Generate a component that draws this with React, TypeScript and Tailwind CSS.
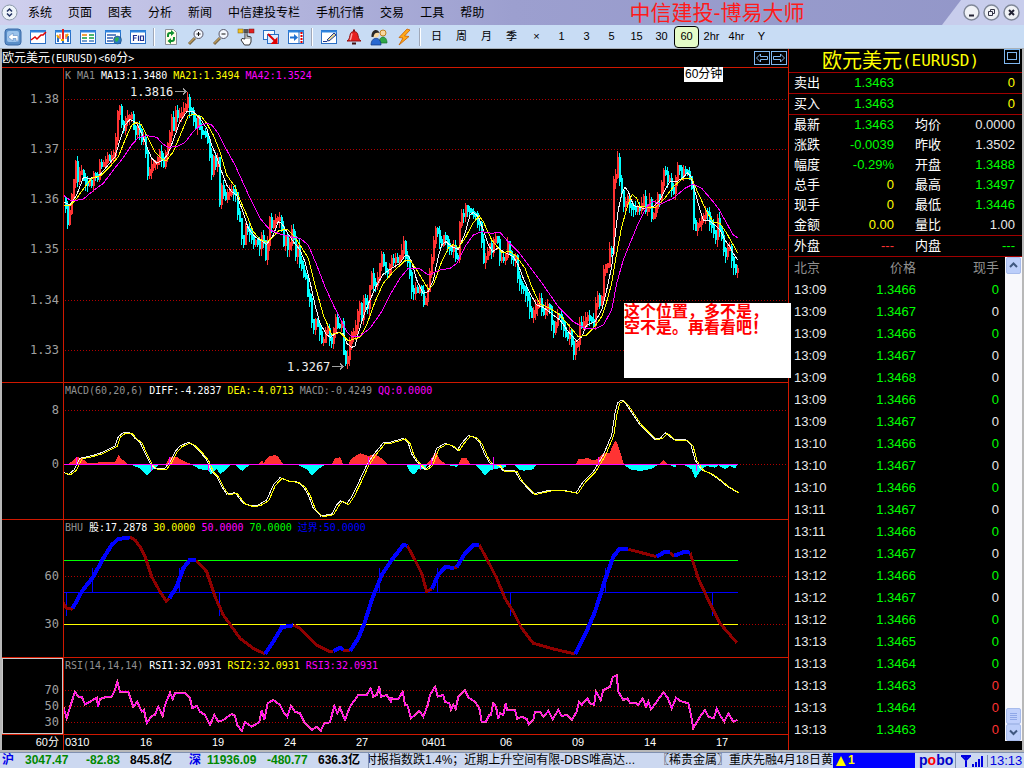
import type { ReactNode } from 'react';

type Point = [number, number];

// Traces are stored in thirds of a pixel, in chunks that each have an origin.
type Chunk = [number, number, string];

const toPoints = (chunks: Chunk[]): Point[] =>
  chunks.flatMap(([ox, oy, data]) =>
    data.split(' ').map((pair): Point => {
      const [x, y] = pair.split(',').map(Number);
      return [(ox + x) / 3, (oy + y) / 3];
    })
  );

const toPolyline = (chunks: Chunk[]) =>
  toPoints(chunks).map(([x, y]) => `${x.toFixed(1)},${y.toFixed(1)}`).join(' ');

const price: Chunk[] = [
  [180, 255, '12,345 22,415 35,310 45,240 52,285 60,260 75,290 92,300 100,260 110,285 118,225 125,240 140,220 150,215 162,195 168,130 173,60 180,90 188,145 192,95 200,105 212,90 218,120 225,145 235,120 245,180 250,160 257,210 262,275 270,240 285,240 290,220 300,200 308,250 318,180 325,170 332,95 338,140 345,80 355,100 365,85 375,70 380,30 388,90 395,80 403,140 410,90 418,140 425,140 433,160 440,150 446,210 453,265 460,210 468,250 473,215 477,360 483,310 493,335 505,320 515,315 525,320 530,380 540,425 547,480 555,435 567,440 577,475 585,470 597,490 605,445 612,480 617,540 622,460 628,400 635,425 642,405 650,400 660,415 670,480 678,450 683,520 692,430 697,440 705,510 712,490 720,545 728,560 735,570 740,630 745,610 750,700 757,735 765,710 775,730 785,770 797,740 806,740 810,800 817,750 827,700 835,740 842,700 847,800'],
  [1020, 450, '10,620 20,640 25,590 35,550 45,530 52,480 58,470 65,510 70,440 80,480 85,430 92,370 100,410 112,390 121,310 130,340 138,380 145,360 155,330 165,325 175,335 183,310 188,265 195,320 203,330 208,380 215,440 225,425 240,410 247,450 254,460 262,410 270,350 278,290 285,245 292,250 300,290 313,240 318,290 328,300 338,290 350,340 355,250 360,190 367,195 375,175 385,180 395,195 405,200 412,230 420,220 425,310 430,330 437,320 447,290 455,310 460,260 470,270 478,330 485,320 492,345 500,275 507,310 515,330 525,320 532,390 540,410 550,415 558,440 565,470 570,500 580,490 587,460 598,455 605,485 615,480 625,465 633,520 638,550 648,505 655,495 662,520 672,545 680,570 688,550 697,610 705,590 710,590 717,515 725,525 735,515 743,495 752,515 760,520 768,440 778,460 785,440 790,340 800,360 806,305 815,300'],
  [1680, 420, '158,120 165,110 170,55 178,120 185,165 192,210 200,165 208,210 220,200 230,205 240,210 250,170 257,220 266,170 274,240 285,195 293,165 300,170 305,110 312,90 320,120 328,115 336,165 343,160 347,75 355,90 365,100 373,90 385,110 392,130 396,200 402,280 410,265 418,240 427,225 437,215 447,245 457,270 465,290 471,245 480,280 487,310 492,350 500,330 508,320 515,360 523,400 530,385 533,375'],
];

const ma13: Chunk[] = [
  [180, 255, '10,350 30,360 50,330 70,278 90,280 115,275 140,245 165,215 180,165 195,120 210,103 230,115 245,145 260,185 275,220 290,235 310,225 325,205 340,165 360,110 380,80 400,80 420,100 440,130 455,180 470,215 485,260 500,300 515,320 530,330 545,370 565,430 585,455 605,468 620,478 640,450 655,410 665,415 680,440 700,470 720,495 735,530 750,590 765,660 780,715 800,750 812,757 830,742 850,745'],
  [1020, 450, '20,580 35,592 45,588 55,550 70,500 90,450 110,405 130,372 160,352 180,340 195,317 205,318 215,335 230,390 250,430 265,425 280,390 295,320 305,285 318,275 335,290 355,298 375,250 390,195 400,187 415,200 430,240 445,285 458,305 475,293 490,305 520,320 535,345 550,385 570,430 590,465 610,472 640,495 660,510 685,545 710,573 725,560 740,525 765,515 785,480 800,420 815,350 825,260 835,180 845,130 855,112 865,125 880,165'],
  [1680, 420, '225,198 250,205 280,200 300,180 315,150 330,125 350,125 370,112 382,98 392,108 405,155 420,210 430,240 445,240 465,255 480,270 495,300 510,320 520,340 533,360'],
];

const ma21: Chunk[] = [
  [180, 255, '10,361 30,363 50,340 75,305 95,280 125,270 150,245 175,215 195,165 215,120 230,112 245,120 265,160 285,200 305,222 318,228 340,200 365,140 385,92 400,88 425,95 440,115 460,150 480,200 500,270 525,305 540,345 560,390 580,440 600,463 620,472 640,455 655,438 680,432 700,450 720,480 745,520 765,600 790,690 815,748'],
  [1020, 450, '0,548 25,572 60,562 80,525 105,455 130,400 160,365 195,332 210,330 230,360 265,418 280,405 305,335 325,295 340,283 355,293 375,265 400,218 418,198 430,215 455,270 485,307 510,305 530,320 555,355 575,410 600,462 630,475 660,495 690,530 715,560 740,555 760,535 785,500 800,455 815,400 830,310 845,230 865,160 877,133 890,145'],
  [1680, 420, '240,200 285,203 310,180 340,140 370,115 395,115 410,150 440,215 460,247 480,250 500,280 520,315 533,340'],
];

const ma42: Chunk[] = [
  [180, 255, '10,330 30,345 45,347 70,342 100,317 130,295 160,255 190,218 215,180 235,158 260,152 290,157 310,178 325,187 350,185 375,172 400,140 420,122 440,115 455,120 475,145 500,195 525,240 550,295 575,350 600,400 630,435 660,447 700,457 720,460 745,480 770,540 795,605 820,660'],
  [1020, 450, '0,505 20,545 35,560 60,558 90,535 125,485 150,435 180,385 205,355 240,357 265,375 300,360 330,355 350,340 375,290 400,255 425,245 455,250 480,247 500,270 535,305 565,345 610,405 655,470 700,515 735,535 765,537 790,525 815,480 830,400 850,330 870,280'],
  [1680, 420, '235,250 260,200 280,183 300,193 340,175 375,145 400,132 425,145 455,180 475,205 500,250 520,285 533,293'],
];

const diff: Chunk[] = [
  [0, 1140, '190,277 205,283 222,270 240,235 270,228 300,220 325,208 345,198 355,170 370,158 390,158 405,175 420,187 435,220 450,250 465,265 495,265 510,245 525,215 540,198 565,187 580,195 600,215 620,240 635,275 650,290 665,320 680,342 705,338 730,370 755,378 775,375 800,360 820,315 840,293 865,303 890,305 910,320 925,345 940,385 962,408 995,402 1010,375 1022,362 1040,372 1055,350 1075,310 1100,255 1120,225 1150,188'],
  [1170, 1140, '0,187 40,175 55,190 65,222 80,245 105,268 122,255 140,205 165,190 185,197 202,210 215,190 235,167 255,172 270,190 285,225 300,250 325,255 340,273 375,272 390,300 430,342 480,330 515,330 558,338 580,305 610,275 640,225 665,165 675,100 683,68 695,60 710,75 750,135 795,178 812,173 826,158 850,178 885,178 903,195 915,240 935,270 960,280 985,297 1010,318 1042,337'],
];

// DEA trails DIFF by two pixels
const dea: Chunk[] = diff.map(([x, y, d]) => [x + 6, y + 2, d]);

const macdUp: Chunk[] = [
  [0, 1140, '205,253 220,240 230,230 245,235 265,250 290,248 310,246 345,246 355,225 365,237 385,253'],
  [0, 1140, '497,253 510,230 530,230 545,240 575,253'],
  [0, 1140, '775,253 787,240 790,250 805,230 825,225 835,230 850,253'],
  [0, 1140, '995,253 1005,235 1020,232 1030,253'],
  [0, 1140, '1045,253 1055,235 1080,220 1095,225 1105,228 1125,222 1145,235 1165,253'],
  [1170, 1140, '110,253 122,240 137,215 150,240 170,253'],
  [1170, 1140, '205,253 215,233 228,233 242,253'],
  [1170, 1140, '558,253 565,237 595,235 612,242 625,235 640,220 660,218 668,195 678,180 690,215 702,253'],
  [1170, 1140, '808,253 822,240 834,253'],
];

const macdDown: Chunk[] = [
  [0, 1140, '395,255 420,265 440,286 460,268 475,255'],
  [0, 1140, '575,255 600,268 625,270 633,284 650,268 660,282 680,268 690,255'],
  [0, 1140, '705,255 727,273 748,255'],
  [0, 1140, '895,255 920,268 935,286 955,268 974,255'],
  [1170, 1140, '50,255 60,275 72,284 85,268 105,268 112,255'],
  [1170, 1140, '175,255 200,261 205,255'],
  [1170, 1140, '255,255 275,275 285,286 300,270 345,262 350,255'],
  [1170, 1140, '375,255 385,268 400,272 430,268 438,255'],
  [1170, 1140, '703,255 720,268 750,273 785,266 804,255'],
  [1170, 1140, '838,255 855,262 860,255'],
  [1170, 1140, '883,255 905,268 915,296 935,268 950,258 975,263 985,256 1005,268 1020,258 1035,265 1042,255'],
];

const bhuUp: Chunk[] = [
  [0, 1545, '218,280 245,230 280,185 310,130 335,90 355,72 390,67'],
  [0, 1545, '508,250 530,215 550,160 570,134 588,136'],
  [0, 1545, '795,417 820,380 845,337 880,331'],
  [0, 1545, '1000,408 1020,398 1030,405'],
  [0, 1545, '1050,408 1075,370 1095,320 1115,255 1145,180 1175,135 1190,116 1210,90 1222,92'],
  [1170, 1545, '125,222 145,180 165,157 192,158'],
  [1170, 1545, '200,157 225,115 250,90 268,90'],
  [1170, 1545, '555,417 585,360 615,290 645,195 670,125 688,102 715,103'],
  [1170, 1545, '800,125 825,110 840,112'],
  [1170, 1545, '852,122 885,110 900,113'],
];

const bhuDown: Chunk[] = [
  [0, 1545, '190,265 200,280 218,283'],
  [0, 1545, '390,67 405,75 420,95 435,125 455,185 480,230 498,258 508,250'],
  [0, 1545, '588,136 620,170 645,245 670,300 720,370 760,400 795,417'],
  [0, 1545, '880,330 900,340 950,390 990,410 1000,408'],
  [0, 1545, '1030,405 1050,408'],
  [1170, 1545, '52,92 75,135 95,175 110,230 125,222'],
  [1170, 1545, '190,158 202,158'],
  [1170, 1545, '268,90 300,150 320,190 345,250 370,290 395,340 430,385 490,402 555,417'],
  [1170, 1545, '715,103 750,112 800,125'],
  [1170, 1545, '840,112 852,125'],
  [1170, 1545, '900,113 925,190 955,255 990,325 1040,383'],
];

const rsi: Chunk[] = [
  [0, 1545, '190,575 200,610 212,570 225,530 235,545 245,545 255,568 270,560 290,548 294,575 300,552 320,545 335,545 345,525 352,500 360,530 385,530 400,575 412,560 425,590 432,585 440,625 455,603 465,600 475,575 488,602 495,570 510,533 518,552 525,535 555,535 570,550 577,580 590,572 600,590 615,600 630,630 643,600 655,620 670,615 695,597 705,602 712,630 725,648 735,622 755,635 778,622 785,585 793,615 803,565 820,555 840,570 850,590 862,605 873,572 885,590 900,595 912,620 935,645 950,635 962,648 973,625 990,622 1003,572 1012,595 1020,578 1035,615 1050,575 1075,540 1100,540 1112,520 1120,545 1130,540 1138,515 1143,545 1160,540 1175,563'],
  [1170, 1545, '0,550 25,552 38,530 45,570 52,570 63,610 88,588 100,605 113,570 120,540 135,515 143,545 160,540 165,560 178,565 183,585 190,570 197,583 205,545 225,525 235,547 255,560 268,580 275,620 288,620 298,600 303,600 310,565 318,575 325,612 330,595 340,600 347,565 352,585 375,585 382,612 395,605 410,612 416,628 430,615 435,590 450,590 460,605 475,588 488,612 505,585 515,603 530,600 545,615 560,590 567,560 575,570 592,550 600,565 612,570 618,530 632,555 640,525 660,515 668,487 680,480 685,530 700,555 712,550 720,563 738,565 745,570 758,550 768,575 775,560 783,583 800,560 820,532 833,548 845,580 858,548 870,558 895,565 903,600 910,640 930,605 945,585 955,605 972,610 980,580 990,600 1003,620 1015,595 1030,620 1042,615'],
];

// One bar every two pixels, interpolated along the price trace
function buildBars() {
  const points = toPoints(price);
  let up = '';
  let down = '';
  let seed = 7;
  const random = () => {
    seed = (seed * 1103515245 + 12345) % 2147483648;
    return seed / 2147483648;
  };
  let i = 0;
  let last = points[0][1];
  for (let x = 65; x < 738; x += 2) {
    while (i < points.length - 2 && points[i + 1][0] < x) i++;
    const [x1, y1] = points[i];
    const [x2, y2] = points[i + 1];
    const y = y1 + ((y2 - y1) * (x - x1)) / (x2 - x1) + (random() - 0.5) * 5;
    const top = Math.min(last, y) - 2;
    const bottom = Math.max(last, y) + 2;
    const bar = `M${x + 0.5} ${Math.round(top - random() * 6)}V${Math.round(bottom + random() * 7)}M${x + 1.5} ${Math.round(top)}V${Math.round(bottom)}`;
    if (y < last) up += bar;
    else down += bar;
    last = y;
  }
  return { up, down };
}

const bars = buildBars();

const menus = ['系统', '页面', '图表', '分析', '新闻', '中信建投专栏', '手机行情', '交易', '工具', '帮助'];
const periods = ['日', '周', '月', '季', '×', '1', '3', '5', '15', '30', '60', '2hr', '4hr', 'Y'];
const dates = ['16', '19', '24', '27', '0401', '06', '09', '14', '17'];

const GREEN = 'text-[#00ff00]';
const YELLOW = 'text-[#ffff00]';
const WHITE = 'text-[#e8e8e8]';
const RED = 'text-[#ff3333]';
const GRAY = 'text-[#909090]';
const MAGENTA = 'text-[#ff00ff]';

const quotes = [
  [
    ['卖出', '1.3463', GREEN, '', '0', YELLOW],
  ],
  [
    ['买入', '1.3463', GREEN, '', '0', YELLOW],
  ],
  [
    ['最新', '1.3463', GREEN, '均价', '0.0000', WHITE],
    ['涨跌', '-0.0039', GREEN, '昨收', '1.3502', WHITE],
    ['幅度', '-0.29%', GREEN, '开盘', '1.3488', GREEN],
    ['总手', '0', YELLOW, '最高', '1.3497', GREEN],
    ['现手', '0', YELLOW, '最低', '1.3446', GREEN],
    ['金额', '0.00', YELLOW, '量比', '1.00', WHITE],
  ],
  [
    ['外盘', '---', RED, '内盘', '---', GREEN],
  ],
];

const ticks = [
  ['13:09', '1.3466', GREEN],
  ['13:09', '1.3467', WHITE],
  ['13:09', '1.3466', GREEN],
  ['13:09', '1.3467', WHITE],
  ['13:09', '1.3468', WHITE],
  ['13:09', '1.3466', GREEN],
  ['13:09', '1.3467', WHITE],
  ['13:10', '1.3466', GREEN],
  ['13:10', '1.3467', WHITE],
  ['13:10', '1.3466', GREEN],
  ['13:11', '1.3467', WHITE],
  ['13:11', '1.3466', GREEN],
  ['13:12', '1.3467', WHITE],
  ['13:12', '1.3466', GREEN],
  ['13:12', '1.3467', WHITE],
  ['13:12', '1.3466', GREEN],
  ['13:13', '1.3465', GREEN],
  ['13:13', '1.3464', GREEN],
  ['13:13', '1.3463', RED],
  ['13:13', '1.3464', RED],
  ['13:13', '1.3463', RED],
];

function Icon({ children }: { children: ReactNode }) {
  return (
    <svg width="18" height="18" viewBox="0 0 18 18" fill="none">
      {children}
    </svg>
  );
}

const frame = (
  <>
    <rect x="1.5" y="2.5" width="15" height="13" fill="#fff" stroke="#2a6fc4" />
    <path d="M1 3.5h16" stroke="#2f86e0" strokeWidth="2" />
  </>
);

const magnifier = (
  <>
    <path d="M2 16l6-6" stroke="#7a6a4a" strokeWidth="3" />
    <path d="M2 15.5l5.5-5.5" stroke="#e8b860" strokeWidth="1" />
    <circle cx="11.5" cy="6" r="4.5" fill="#f4f8ff" stroke="#556" />
  </>
);

const tools: { label: string; icon: ReactNode }[][] = [
  [
    {
      label: '返回',
      icon: (
        <>
          <rect x="1" y="1" width="16" height="16" rx="3" fill="#5a8fc8" stroke="#3a6aa8" />
          <rect x="3" y="3" width="12" height="11" rx="2" fill="#9cc4ec" />
          <path d="M4 9l5-4v2.5h4a1 1 0 0 1 1 1V13h-2v-2.5H9V13z" fill="#fff" stroke="#4a7ab8" strokeWidth=".5" />
        </>
      ),
    },
    { label: '分时图', icon: <>{frame}<path d="M2 12l4-3 2 2 4-4h2l3-3" stroke="#e00000" strokeWidth="1.5" /></> },
    {
      label: 'K线图',
      icon: (
        <>
          {frame}
          <path d="M4 8v6M14 8v6M9 12v3" stroke="#2a6fc4" strokeWidth="2" />
          <path d="M9 1v10" stroke="#e02020" strokeWidth="2" />
          <path d="M6 6v5M12 6v5" stroke="#e02020" />
          <path d="M3 7l2 3M14 6l-2 3M7 12h3" stroke="#f0a800" strokeWidth="2" />
        </>
      ),
    },
    {
      label: '报价',
      icon: (
        <>
          {frame}
          <path d="M3 7h5" stroke="#f08000" strokeWidth="1.5" />
          <path d="M10 7h5M3 10h5M10 10h5" stroke="#10a040" strokeWidth="1.5" />
          <path d="M3 13h5M10 13h5" stroke="#4a80c0" strokeWidth="1.5" />
        </>
      ),
    },
    {
      label: '新闻',
      icon: (
        <>
          {frame}
          <path d="M3 7h9M3 10h6M3 13h6" stroke="#3060b0" strokeWidth="1.5" />
          <circle cx="13.5" cy="12" r="4" fill="#2878c8" stroke="#204060" strokeWidth=".5" />
          <path d="M11 10l3-1 1 2-2 3-2-1z" fill="#30b050" />
        </>
      ),
    },
    {
      label: 'F10',
      icon: (
        <>
          {frame}
          <path d="M4.5 13V7.5h3.5M4.5 10h3M9.5 7.5V13M11.5 8h3v4.500h-3z" stroke="#203090" strokeWidth="1.2" />
        </>
      ),
    },
  ],
  [
    {
      label: '刷新',
      icon: (
        <>
          <path d="M3.5 1.5h8l3 3v12h-11z" fill="#fffde8" stroke="#8a9098" />
          <path d="M6 9V7a2 2 0 0 1 2-2h2M12 9v2a2 2 0 0 1-2 2H8" stroke="#109030" strokeWidth="2" />
          <path d="M9 2l3.5 3L9 8zM9 10l-3.5 3L9 16z" fill="#109030" />
        </>
      ),
    },
    { label: '放大', icon: <>{magnifier}<path d="M9.5 6h4M11.5 4v4" stroke="#111" /></> },
    { label: '缩小', icon: <>{magnifier}<path d="M9.5 6h4" stroke="#111" /></> },
    {
      label: '手形',
      icon: (
        <>
          <rect x="1" y="1" width="5" height="4" fill="#f0c020" stroke="#806010" strokeWidth=".5" />
          <rect x="6.5" y="1" width="5" height="4" fill="#555" />
          <rect x="12" y="1" width="5" height="4" fill="#e02020" stroke="#701010" strokeWidth=".5" />
          <path d="M8 11V5.5a1 1 0 0 1 2 0V8l4 1v5l-1.5 3h-5L4 12l1-1.5z" fill="#fff" stroke="#333" />
          <path d="M10 8v3M12 8.5V11" stroke="#333" strokeWidth=".7" />
        </>
      ),
    },
    {
      label: '切换',
      icon: (
        <>
          <rect x="1.5" y="2.5" width="11" height="9" fill="#f4faff" stroke="#2a6fc4" />
          <rect x="5.5" y="6.5" width="11" height="9" fill="#dcecff" stroke="#2a6fc4" />
          <path d="M6 6l7 7" stroke="#e00000" strokeWidth="2" />
          <path d="M15.5 9v7h-7z" fill="#e00000" />
        </>
      ),
    },
    {
      label: '右移',
      icon: (
        <>
          {frame}
          <path d="M12 3v12" stroke="#2a6fc4" />
          <path d="M14.5 4v11" stroke="#e00000" strokeWidth="2" strokeDasharray="2 1" />
          <path d="M3 9.5h5" stroke="#2070d0" strokeWidth="2" />
          <path d="M7 6l4 3.5L7 13z" fill="#2070d0" />
        </>
      ),
    },
  ],
  [
    {
      label: '画线',
      icon: (
        <>
          {frame}
          <path d="M3 13.5h4l8-8" stroke="#203a90" />
          <path d="M7 12l7-7 2 2-7 6z" fill="#e8d890" stroke="#203a90" />
        </>
      ),
    },
    {
      label: '预警',
      icon: (
        <>
          <path d="M9 1.5v2" stroke="#801010" strokeWidth="2" />
          <path d="M2 13c3-1.5 2.500-5 3.500-7.500C6.500 3 11.500 3 12.500 5.500 13.500 8 13 11.500 16 13z" fill="#e82020" stroke="#901010" />
          <path d="M7 5.5C6 8 6.5 10 5 12" stroke="#ffa0a0" strokeWidth="1.5" />
          <path d="M7 15.5h4" stroke="#401010" strokeWidth="2" />
        </>
      ),
    },
    {
      label: '社区',
      icon: (
        <>
          <path d="M9 15c0-8 8-8 8 0z" fill="#30a848" stroke="#187028" strokeWidth=".7" />
          <circle cx="13" cy="5" r="3" fill="#f8d8a0" stroke="#c08020" />
          <path d="M1 17c0-9 10-9 10 0z" fill="#2868d0" stroke="#103880" strokeWidth=".7" />
          <circle cx="5.5" cy="6" r="3.5" fill="#f8d8a0" />
          <path d="M1.5 9C1 1 8 0 9.5 5 6 4 4 5 3.5 9z" fill="#282828" />
        </>
      ),
    },
    { label: '闪电', icon: <path d="M12 1L4 9.5l4 .5-4 7 10-8.5-4.5-.5L15 2z" fill="#ffa818" stroke="#c86000" strokeWidth=".8" /> },
  ],
];

function MenuBar() {
  return (
    <header className="flex h-[25px] items-center bg-linear-to-r from-[#d0d0ee] via-[#9c9fcf] via-50% to-[#9296c8] text-xs">
      <button aria-label="系统菜单" className="ml-px mr-[10px]">
        <svg width="17" height="17" viewBox="0 0 17 17" fill="none">
          <circle cx="8.5" cy="8.5" r="7.5" fill="#eef4fa" stroke="#8a98a8" />
          <path d="M6 7.5L8.5 5 11 7.5M6 9.5L8.5 12 11 9.5" stroke="#203060" strokeWidth="1.5" />
        </svg>
      </button>
      <nav className="flex gap-4">
        {menus.map((menu) => (
          <button key={menu} className="whitespace-nowrap">{menu}</button>
        ))}
      </nav>
      <h1 className="flex-1 whitespace-nowrap pl-2 text-center text-[21px] leading-6 text-[#ff1a1a]">中信建投-博易大师</h1>
      <div className="flex h-full w-[82px] items-center justify-end gap-[3px] bg-[#c8cdec] pr-1 [clip-path:polygon(19px_0,100%_0,100%_100%,0_100%)]">
        <WindowButton label="最小化"><path d="M6 11.5h5" stroke="#223" strokeWidth="2" /></WindowButton>
        <WindowButton label="还原"><path d="M7.5 7V5.5h4v4H10M5.5 7.5h4v4h-4z" stroke="#334" /></WindowButton>
        <WindowButton label="关闭"><path d="M6 6l5 5M11 6l-5 5" stroke="#223" strokeWidth="2" /></WindowButton>
      </div>
    </header>
  );
}

function WindowButton({ label, children }: { label: string; children: ReactNode }) {
  return (
    <button aria-label={label}>
      <svg width="17" height="17" viewBox="0 0 17 17" fill="none">
        <circle cx="8.5" cy="8.5" r="7.5" fill="#f0f2f6" stroke="#808898" strokeWidth="1.5" />
        {children}
      </svg>
    </button>
  );
}

function ToolBar() {
  return (
    <div className="flex h-6 items-center border-b border-[#a8b0b8] bg-[#c8dcf4] text-[11px]">
      {tools.map((group) => (
        <div key={group[0].label} className="flex items-center">
          {group.map((tool) => (
            <button key={tool.label} aria-label={tool.label} className="flex w-[25px] justify-center">
              <Icon>{tool.icon}</Icon>
            </button>
          ))}
          <div className="mx-[3px] h-[18px] w-[2px] border-l border-r border-l-[#a0a8b8] border-r-white" />
        </div>
      ))}
      {periods.map((period) => (
        <button
          key={period}
          className={
            period === '60'
              ? 'h-[22px] w-[25px] rounded-sm border border-black bg-[#e4fcc8]'
              : 'h-[22px] w-[25px]'
          }
        >
          {period}
        </button>
      ))}
    </div>
  );
}

interface PanelProps {
  top: number;
  height: string;
  legend: [string, string][];
  labels: [string, number][];
  boxed?: boolean;
  children: ReactNode;
}

// `top` is where the plot area starts in chart coordinates, below the legend
function Panel({ top, height, legend, labels, boxed, children }: PanelProps) {
  return (
    <section className="flex border-b border-[#d01800]">
      <div className={boxed ? 'w-[61px] border border-[#c8c8c8]' : 'w-[61px]'}>
        <svg className="block h-4 w-full overflow-visible">
          <g fill="#a0a0a0" textAnchor="end" className="font-['DejaVu_Sans_Mono',monospace] text-xs">
            {labels.map(([text, y]) => (
              <text key={text} x={boxed ? 56 : 57} y={y - top + (boxed ? 19 : 20)}>{text}</text>
            ))}
          </g>
        </svg>
      </div>
      <div className="min-w-0 flex-1 overflow-hidden border-l border-[#d01800]">
        <div className="flex h-4 gap-[6px] whitespace-nowrap pl-px font-['DejaVu_Sans_Mono','Noto_Sans_CJK_SC',monospace] text-[10px] leading-4">
          {legend.map(([text, color]) => (
            <span key={text} className={color}>{text}</span>
          ))}
        </div>
        <svg className={`block w-full ${height}`} shapeRendering="crispEdges" fill="none">
          {labels.map(([text, y]) => (
            <line key={text} x1="1" x2="100%" y1={y - top + 0.5} y2={y - top + 0.5} stroke="#b00000" strokeDasharray="1 2" />
          ))}
          <g transform={`translate(-64 ${-top})`}>{children}</g>
        </svg>
      </div>
    </section>
  );
}

function Chart() {
  return (
    <main className="relative min-w-0 flex-1 border-r border-[#d01800]">
      <div className="flex h-[19px] items-center justify-between border-b border-[#d01800] pr-px text-xs text-white">
        <h2 className="whitespace-nowrap">
          欧元美元<span className="font-['DejaVu_Sans_Mono',monospace] text-[10px]">(EURUSD)&lt;60</span>分
          <span className="font-['DejaVu_Sans_Mono',monospace] text-[10px]">&gt;</span>
        </h2>
        <div className="flex gap-px">
          <button aria-label="上一个" className="border border-[#80b8f0]">
            <svg width="14" height="12" viewBox="0 0 14 12" fill="none">
              <path d="M1.5 6l4-4v2.5h7v3h-7V10z" stroke="#80b8f0" />
            </svg>
          </button>
          <button aria-label="下一个" className="border border-[#80b8f0]">
            <svg width="14" height="12" viewBox="0 0 14 12" fill="none">
              <path d="M12.5 6l-4-4v2.5h-7v3h7V10z" stroke="#80b8f0" />
            </svg>
          </button>
        </div>
      </div>

      <Panel
        top={84}
        height="h-[298px]"
        legend={[
          ['K', GRAY],
          ['MA1', GRAY],
          ['MA13:1.3480', 'text-white'],
          ['MA21:1.3494', YELLOW],
          ['MA42:1.3524', MAGENTA],
        ]}
        labels={[['1.38', 99], ['1.37', 149], ['1.36', 199], ['1.35', 249], ['1.34', 300], ['1.33', 350]]}
      >
        <path d={bars.up} stroke="#ff3333" />
        <path d={bars.down} stroke="#00ffff" />
        <polyline points={toPolyline(ma13)} stroke="#f4f4f4" />
        <polyline points={toPolyline(ma21)} stroke="#ffff00" />
        <polyline points={toPolyline(ma42)} stroke="#ff00ff" />
        <g fill="#f0f0f0" className="font-['DejaVu_Sans_Mono',monospace] text-xs">
          <text x="130" y="96">1.3816</text>
          <text x="287" y="371">1.3267</text>
        </g>
        <path d="M175 91.5h11M183 88.5l3 3-3 3M332 366.5h11M340 363.5l3 3-3 3" stroke="#a0a0a0" />
      </Panel>

      <Panel
        top={399}
        height="h-[120px]"
        legend={[
          ['MACD(60,20,6)', GRAY],
          ['DIFF:-4.2837', 'text-white'],
          ['DEA:-4.0713', YELLOW],
          ['MACD:-0.4249', GRAY],
          ['QQ:0.0000', MAGENTA],
        ]}
        labels={[['8', 410], ['0', 464]]}
      >
        {macdUp.map((area, i) => (
          <polygon key={i} points={toPolyline([area])} fill="#ff3333" />
        ))}
        {macdDown.map((area, i) => (
          <polygon key={i} points={toPolyline([area])} fill="#00ffff" />
        ))}
        <polyline points={toPolyline(diff)} stroke="#f0f0f0" />
        <polyline points={toPolyline(dea)} stroke="#ffff00" />
        <path d="M64 464.5H738M76.5 457v7M151.5 464v7M169.5 457v7M208.5 464v7M368.5 457v7M420.5 464v6M431.5 458v6M493.5 457v12M598.5 457v7M696.5 464v7" stroke="#ff00ff" />
      </Panel>

      <Panel
        top={536}
        height="h-[121px]"
        legend={[
          ['BHU', GRAY],
          ['股:17.2878', 'text-white'],
          ['30.0000', YELLOW],
          ['50.0000', MAGENTA],
          ['70.0000', GREEN],
          ['过界:50.0000', 'text-[#0000ff]'],
        ]}
        labels={[['60', 576], ['30', 624]]}
      >
        <path d="M64 592.5H738M66.5 592v24M92.5 568v24M179.5 568v24M219.5 592v24M379.5 568v24M437.5 568v24M510.5 592v24M605.5 568v24M712.5 592v24" stroke="#0000ff" />
        <path d="M64 560.5H738" stroke="#00ff00" />
        <path d="M64 624.5H738" stroke="#ffff00" />
        {bhuDown.map((part, i) => (
          <polyline key={i} points={toPolyline([part])} stroke="#900000" strokeWidth="3" />
        ))}
        {bhuUp.map((part, i) => (
          <polyline key={i} points={toPolyline([part])} stroke="#0000ff" strokeWidth="4" />
        ))}
      </Panel>

      <Panel
        top={674}
        height="h-[60px]"
        boxed
        legend={[
          ['RSI(14,14,14)', GRAY],
          ['RSI1:32.0931', 'text-white'],
          ['RSI2:32.0931', YELLOW],
          ['RSI3:32.0931', MAGENTA],
        ]}
        labels={[['70', 690], ['50', 706], ['30', 722]]}
      >
        <polyline points={toPolyline(rsi)} stroke="#ff60a8" strokeWidth="2" />
        <polyline points={toPolyline(rsi)} stroke="#ff00ff" />
      </Panel>

      <div className="flex h-[15px] overflow-hidden text-[11px] leading-[15px] text-white">
        <div className="w-[61px] pr-1 text-right">60分</div>
        <div className="w-[47px] border-l border-[#d01800] pl-px">0310</div>
        {dates.map((date) => (
          <div key={date} className="w-[72px] text-center">{date}</div>
        ))}
      </div>

      <div className="absolute left-[682px] top-[18px] bg-white px-px text-xs leading-[15px] text-black">60分钟</div>
      <p className="absolute left-[622px] top-[254px] z-10 h-[75px] w-[167px] whitespace-nowrap bg-white pt-px text-base font-bold leading-4 text-[#ff0000]">
        这个位置，多不是，
        <br />
        空不是。再看看吧！
      </p>
    </main>
  );
}

function QuotePanel() {
  return (
    <aside className="w-[233px] text-[13px] text-white">
      <div className="flex h-6 items-center border-b border-[#a00000] pr-[2px]">
        <h2 className={`flex flex-1 items-center justify-center whitespace-nowrap pl-2 text-[20px] leading-5 ${YELLOW}`}>
          欧元美元<span className="font-['DejaVu_Sans_Mono',monospace] text-base leading-5">(EURUSD)</span>
        </h2>
        <button aria-label="窗口" className="self-start border border-[#80b8f0] p-[2px]">
          <svg className="block" width="10" height="9" fill="none">
            <rect x="0.5" y="0.5" width="9" height="7" stroke="#80b8f0" />
          </svg>
        </button>
      </div>
      {quotes.map((group) => (
        <dl key={group[0][0]} className="border-b border-[#a00000]">
          {group.map(([label, value, color, label2, value2, color2]) => (
            <div key={label} className="flex h-5 items-center gap-[21px] pl-[5px] pr-[7px]">
              <div className="flex flex-1 justify-between">
                <dt>{label}</dt>
                <dd className={color}>{value}</dd>
              </div>
              <div className="flex flex-1 justify-between">
                <dt>{label2}</dt>
                <dd className={color2}>{value2}</dd>
              </div>
            </div>
          ))}
        </dl>
      ))}
      <div className="flex">
        <table className="flex-1">
          <thead>
            <tr className="h-[22px] text-[#909090]">
              <th className="pl-[5px] text-left font-normal">北京</th>
              <th className="text-right font-normal">价格</th>
              <th className="pr-[6px] text-right font-normal">现手</th>
            </tr>
          </thead>
          <tbody>
            {ticks.map(([time, value, color], i) => (
              <tr key={i} className="h-[22px]">
                <td className="w-[60px] pl-[5px] text-[#e8e8e8]">{time}</td>
                <td className={`w-[67px] text-right ${GREEN}`}>{value}</td>
                <td className={`pr-[6px] text-right ${color}`}>0</td>
              </tr>
            ))}
          </tbody>
        </table>
        <div className="flex w-[17px] flex-col bg-[#f8f8fc] px-px">
          <ScrollButton label="向上"><path d="M4 9l3.5-3.5L11 9" stroke="#405880" strokeWidth="2" /></ScrollButton>
          <div className="flex-1" />
          <div className="h-4 rounded-xs border border-[#a8bcec] bg-[#c0d0fc]">
            <svg className="block" width="13" height="14" fill="none">
              <path d="M3 4.5h7M3 6.5h7M3 8.5h7M3 10.5h7" stroke="#90a8e8" />
            </svg>
          </div>
          <ScrollButton label="向下"><path d="M4 5.5L7.5 9 11 5.5" stroke="#405880" strokeWidth="2" /></ScrollButton>
        </div>
      </div>
    </aside>
  );
}

function ScrollButton({ label, children }: { label: string; children: ReactNode }) {
  return (
    <button aria-label={label} className="h-[17px] rounded-xs border border-[#a8bcec] bg-[#bccefa]">
      <svg className="block" width="13" height="15" viewBox="1 0 13 15" fill="none">{children}</svg>
    </button>
  );
}

function StatusBar() {
  return (
    <footer className="flex h-4 items-center whitespace-nowrap border-t border-[#8090b0] bg-[#ccd8f0] text-xs leading-[15px] text-black">
      <div className="flex w-[368px] pl-[2px] font-bold">
        <span className="w-[23px] text-[#0000e8]">沪</span>
        <span className="w-[61px] text-[#008800]">3047.47</span>
        <span className="w-[44px] text-[#008800]">-82.83</span>
        <span className="w-[59px]">845.8亿</span>
        <span className="w-[18px] text-[#0000e8]">深</span>
        <span className="w-[60px] text-[#008800]">11936.09</span>
        <span className="w-[51px] text-[#008800]">-480.77</span>
        <span>636.3亿</span>
      </div>
      <div className="flex min-w-0 flex-1 justify-between overflow-hidden border-l border-[#8090b0]">
        <span className="-ml-1">时报指数跌1.4%；近期上升空间有限-DBS唯高达...</span>
        <span>〖稀贵金属〗重庆先融4月18日黄</span>
      </div>
      <div className="flex w-[82px] items-center gap-[2px] bg-[#0000ff] pl-[3px] font-bold text-[#ffff00]">
        <svg width="10" height="10"><path d="M5 0l5 10H0z" fill="#ffff00" /></svg>
        1
      </div>
      <div className="w-[41px] border-r border-[#8090b0] pl-1 text-sm font-bold leading-[15px] text-[#0000c8]">
        p<span className="text-[#ff0000]">o</span>bo
      </div>
      <div className="flex w-8 justify-center border-r border-[#8090b0]">
        <svg width="22" height="12" fill="none" stroke="#0000e0">
          <path d="M0 1h10M1 1l4 4 4-4M5 1v11" strokeWidth="2" />
          <path d="M12 12V9M15 12V7M18 12V4M21 12V1" strokeWidth="2" />
        </svg>
      </div>
      <time className="w-9 text-center text-[13px] text-[#0000e0]">13:13</time>
    </footer>
  );
}

export default function App() {
  return (
    <div className="flex min-h-screen flex-col bg-black font-['Liberation_Sans','Noto_Sans_CJK_SC',sans-serif] text-black">
      <MenuBar />
      <ToolBar />
      <div className="flex flex-1 border-b-2 border-l-2 border-r-2 border-[#b8b8b8] bg-black">
        <Chart />
        <QuotePanel />
      </div>
      <StatusBar />
    </div>
  );
}
